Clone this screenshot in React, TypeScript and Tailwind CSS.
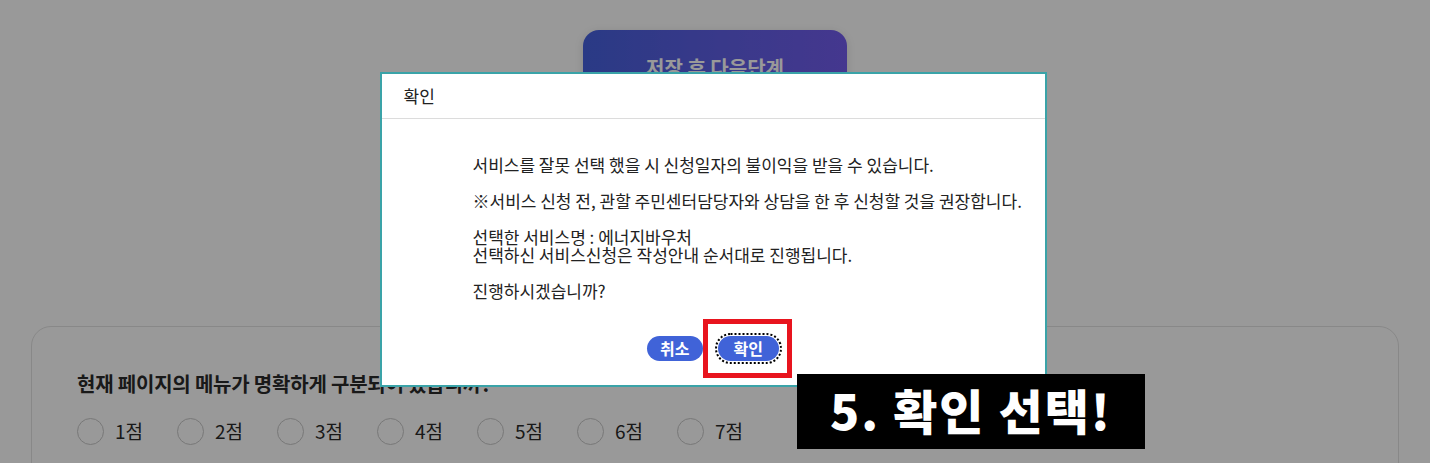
import React from 'react';

const SCORES = ['1점', '2점', '3점', '4점', '5점', '6점', '7점'];

const kr = { fontFamily: '"Noto Sans CJK KR", "Noto Sans", sans-serif' };

export default function App() {
  return (
    <div className="relative h-[463px] w-[1430px] overflow-hidden bg-white" style={kr}>
      {/* page under the dialog */}
      <div className="flex flex-col items-center pt-[30px]">
        <button className="h-[76px] w-[264px] rounded-[16px] bg-gradient-to-r from-[#4661de] to-[#735dee] text-[20px] font-bold text-white shadow-[0_2px_10px_rgba(0,0,0,0.12)]">
          저장 후 다음단계
        </button>
      </div>

      <div className="mx-[31px] mt-[220px] h-[200px] rounded-[20px] border border-[#e3e3e3] px-[45px] pt-[42px]">
        <p className="text-[20px] font-bold tracking-[-0.2px] text-[#2b2b2b]">현재 페이지의 메뉴가 명확하게 구분되어 있습니까?</p>
        <div className="mt-[18px] flex">
          {SCORES.map(s => (
            <label key={s} className="flex w-[100px] items-center gap-[11px]">
              <span className="h-[27px] w-[27px] rounded-full border border-[#c8c8c8] bg-white" />
              <span className="text-[19px] text-[#2b2b2b]">{s}</span>
            </label>
          ))}
        </div>
      </div>

      {/* dim backdrop */}
      <div className="absolute inset-0 bg-black/40" />

      {/* dialog */}
      <div className="absolute inset-0 flex items-center justify-center pb-[5px]">
        <div className="relative mr-[4px] h-[315px] w-[667px] border-2 border-[#3aa3a8] bg-white">
          <div className="flex h-[45px] items-center border-b border-[#dcdcdc] pl-[22px] text-[17px] text-[#222]">
            확인
          </div>
          <div className="flex flex-col">
            <p className="pl-[91px] pt-[37px] text-[17px] leading-[18px] text-[#222]">
              서비스를 잘못 선택 했을 시 신청일자의 불이익을 받을 수 있습니다.
              <br />
              <br />
              ※서비스 신청 전, 관할 주민센터담당자와 상담을 한 후 신청할 것을 권장합니다.
              <br />
              <br />
              선택한 서비스명 : 에너지바우처
              <br />
              선택하신 서비스신청은 작성안내 순서대로 진행됩니다.
              <br />
              <br />
              진행하시겠습니까?
            </p>
            <div className="mt-[36px] flex items-center justify-center gap-[15px]">
              <button className="h-[25px] rounded-full bg-[#4063d8] px-[13px] text-[16px] font-bold leading-[25px] text-white">
                취소
              </button>
              <span className="relative">
                <button className="h-[25px] rounded-full bg-[#4063d8] px-[16px] text-[16px] font-bold leading-[25px] text-white outline-2 outline-offset-1 outline-dotted outline-black">
                  확인
                </button>
                <span className="absolute -bottom-[17px] -left-[15px] -right-[13px] -top-[17px] border-[5px] border-[#e8141e]" />
              </span>
            </div>
          </div>
        </div>
      </div>

      {/* annotation label */}
      <div className="absolute left-[797px] top-[374px] flex h-[75px] w-[348px] items-center justify-center bg-black pb-[6px] text-[48px] font-black tracking-[2px] text-white">
        5. 확인 선택!
      </div>
    </div>
  );
}
